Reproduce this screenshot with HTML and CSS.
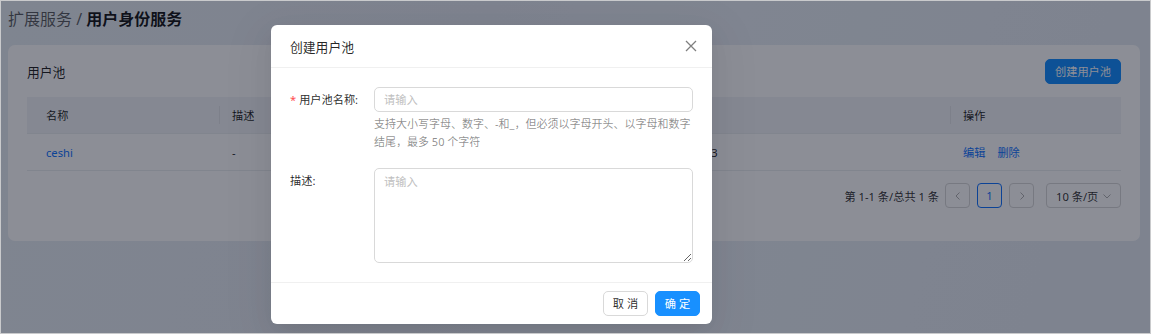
FILE: index.html
```html
<!DOCTYPE html>
<html lang="zh-CN">
<head>
<meta charset="UTF-8">
<meta name="viewport" content="width=device-width, initial-scale=1.0">
<title>用户身份服务</title>
<link rel="stylesheet" href="styles.css">
</head>
<body>
<div class="frame">
  <div class="page">
    <div class="breadcrumb"><span class="crumb">扩展服务 / </span><b>用户身份服务</b></div>

    <div class="card">
      <div class="card-head">
        <span class="card-title">用户池</span>
        <button class="btn btn-primary">创建用户池</button>
      </div>

      <table class="table">
        <colgroup>
          <col style="width: 192px">
          <col style="width: 380px">
          <col style="width: 351px">
          <col style="width: 171px">
        </colgroup>
        <thead>
          <tr>
            <th class="first">名称</th>
            <th>描述</th>
            <th></th>
            <th>操作</th>
          </tr>
        </thead>
        <tbody>
          <tr>
            <td class="first"><a class="link">ceshi</a></td>
            <td>-</td>
            <td>2024-03-21 14:05:23</td>
            <td><a class="link">编辑</a><a class="link">删除</a></td>
          </tr>
        </tbody>
      </table>

      <div class="pager">
        <span class="pager-total">第 1-1 条/总共 1 条</span>
        <span class="pager-item disabled">
          <svg width="10" height="10" viewBox="0 0 10 10"><path d="M6.5 1.5 3 5l3.5 3.5" fill="none" stroke="currentColor" stroke-width="1"/></svg>
        </span>
        <span class="pager-item active">1</span>
        <span class="pager-item disabled">
          <svg width="10" height="10" viewBox="0 0 10 10"><path d="M3.5 1.5 7 5 3.5 8.5" fill="none" stroke="currentColor" stroke-width="1"/></svg>
        </span>
        <span class="pager-size">10 条/页
          <svg width="10" height="10" viewBox="0 0 10 10"><path d="M1.5 3.5 5 7l3.5-3.5" fill="none" stroke="currentColor" stroke-width="1"/></svg>
        </span>
      </div>
    </div>
  </div>

  <div class="mask"></div>

  <div class="modal">
    <div class="modal-head">
      <span class="modal-title">创建用户池</span>
      <svg class="modal-close" width="12" height="12" viewBox="0 0 12 12"><path d="M1 1l10 10M11 1 1 11" stroke="currentColor" stroke-width="1.3"/></svg>
    </div>
    <div class="modal-body">
      <div class="form-item">
        <label class="form-label"><span class="req">*</span>用户池名称:</label>
        <div class="form-control">
          <input class="input" type="text" placeholder="请输入">
          <div class="help">支持大小写字母、数字、-和_，但必须以字母开头、以字母和数字结尾，最多 50 个字符</div>
        </div>
      </div>
      <div class="form-item">
        <label class="form-label">描述:</label>
        <div class="form-control">
          <textarea class="input textarea" placeholder="请输入"></textarea>
        </div>
      </div>
    </div>
    <div class="modal-foot">
      <button class="btn">取 消</button>
      <button class="btn btn-primary">确 定</button>
    </div>
  </div>
</div>
</body>
</html>
```

FILE: styles.css
```css
html, body {
  margin: 0;
  padding: 0;
}
body {
  font-family: "Noto Sans", "Noto Sans CJK SC", sans-serif;
  font-size: 11.2px;
  color: rgba(0, 0, 0, 0.85);
}
.frame {
  position: relative;
  width: 1151px;
  height: 334px;
  box-sizing: border-box;
  border: 1px solid #c9cacc;
  overflow: hidden;
  background: linear-gradient(105deg, #e8eef4 0%, #e6ecf3 40%, #e9eff6 60%, #e5ebf2 100%);
}
.page {
  padding: 6px 10px 0 7px;
}
.breadcrumb {
  font-size: 16px;
  line-height: 24px;
  margin-bottom: 14px;
}
.crumb {
  color: rgba(0, 0, 0, 0.6);
}
.breadcrumb b {
  color: rgba(0, 0, 0, 0.88);
}

.card {
  background: #fff;
  border-radius: 7px;
  padding: 14px 19px 33px;
}
.card-head {
  display: flex;
  justify-content: space-between;
  align-items: center;
  height: 25px;
  margin-bottom: 13px;
}
.card-title {
  font-size: 12.8px;
}

.btn {
  height: 25px;
  padding: 0 9px;
  border: 1px solid #d9d9d9;
  border-radius: 5px;
  background: #fff;
  font-family: inherit;
  font-size: 11.2px;
  color: rgba(0, 0, 0, 0.85);
  line-height: 23px;
}
.btn-primary {
  background: #1890ff;
  border-color: #1890ff;
  color: #fff;
}

.table {
  width: 1094px;
  border-collapse: collapse;
  table-layout: fixed;
}
.table th {
  height: 36px;
  padding: 0 13px;
  text-align: left;
  font-weight: normal;
  background: linear-gradient(#e4e6ea, #e4e6ea) left center / 1px 18px no-repeat, #f3f5f7;
  border-bottom: 1px solid #eceef0;
}
.table th.first {
  background: #f3f5f7;
}
.table td {
  height: 36px;
  padding: 0 13px;
  border-bottom: 1px solid #eceef0;
  white-space: nowrap;
}
.table .first {
  padding-left: 19px;
}
.link {
  color: #1677ff;
  margin-right: 12px;
}

.pager {
  display: flex;
  justify-content: flex-end;
  align-items: center;
  margin-top: 12px;
  height: 25px;
}
.pager-total {
  margin-right: 6px;
  color: rgba(0, 0, 0, 0.8);
}
.pager-item {
  display: flex;
  align-items: center;
  justify-content: center;
  box-sizing: border-box;
  width: 25px;
  height: 25px;
  border: 1px solid #d9d9d9;
  border-radius: 4px;
  margin-right: 7px;
}
.pager-item.disabled {
  color: rgba(0, 0, 0, 0.3);
}
.pager-item.active {
  border-color: #1677ff;
  color: #1677ff;
}
.pager-size {
  display: flex;
  align-items: center;
  justify-content: space-between;
  box-sizing: border-box;
  width: 75px;
  height: 25px;
  margin-left: 5px;
  padding: 0 8px 0 9px;
  border: 1px solid #d9d9d9;
  border-radius: 4px;
  color: rgba(0, 0, 0, 0.8);
}
.pager-size svg {
  color: rgba(0, 0, 0, 0.3);
}

.mask {
  position: absolute;
  inset: 0;
  background: rgba(0, 4, 22, 0.45);
}

.modal {
  position: absolute;
  left: 270px;
  top: 24px;
  width: 441px;
  background: #fff;
  border-radius: 6px;
  box-shadow: 0 6px 16px -8px rgba(0, 0, 0, 0.08), 0 9px 28px 0 rgba(0, 0, 0, 0.05), 0 12px 48px 16px rgba(0, 0, 0, 0.03);
}
.modal-head {
  display: flex;
  justify-content: space-between;
  align-items: center;
  height: 42px;
  padding: 0 15px 0 19px;
  border-bottom: 1px solid #f0f0f0;
}
.modal-title {
  font-size: 12.8px;
}
.modal-close {
  color: rgba(0, 0, 0, 0.5);
}
.modal-body {
  padding: 19px;
}
.form-item {
  display: flex;
  margin-bottom: 17px;
}
.form-item:last-child {
  margin-bottom: 0;
}
.form-label {
  width: 84px;
  flex: none;
  line-height: 25px;
}
.req {
  color: #ff4d4f;
  margin-right: 3px;
}
.form-control {
  flex: 1;
}
.input {
  display: block;
  box-sizing: border-box;
  width: 100%;
  height: 25px;
  padding: 0 9px;
  border: 1px solid #d9d9d9;
  border-radius: 5px;
  font-family: inherit;
  font-size: 11.2px;
  color: rgba(0, 0, 0, 0.85);
  outline: none;
  margin: 0;
}
.input::placeholder {
  color: #bfbfbf;
}
.textarea {
  height: 95px;
  padding: 4px 9px;
  line-height: 18px;
  resize: vertical;
}
.help {
  padding-top: 3px;
  font-size: 11px;
  line-height: 18px;
  color: rgba(0, 0, 0, 0.45);
}
.modal-foot {
  display: flex;
  justify-content: flex-end;
  gap: 7px;
  padding: 8px 12px;
  border-top: 1px solid #f0f0f0;
}
.modal-foot .btn {
  width: 45px;
  padding: 0;
}
```
